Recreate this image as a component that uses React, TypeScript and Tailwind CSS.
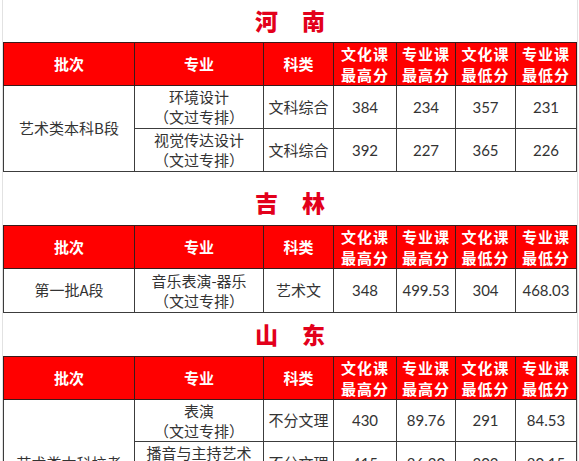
import React from "react";

const cjk = { fontFamily: '"Noto Sans CJK SC", "Noto Sans", sans-serif' };
const num = { fontFamily: 'Lato, "Liberation Sans", sans-serif' };

const widths = [131, 129, 70, 63, 59, 60, 61];

function Cols() {
  return (
    <colgroup>
      {widths.map((w, i) => (
        <col key={i} style={{ width: w }} />
      ))}
    </colgroup>
  );
}

function Header() {
  const two = [
    ["文化课", "最高分"],
    ["专业课", "最高分"],
    ["文化课", "最低分"],
    ["专业课", "最低分"],
  ];
  return (
    <tr className="h-[43px] bg-[#ff0000] text-white font-bold text-[15px]">
      <td className="border border-[#3a1a1a] text-center">批次</td>
      <td className="border border-[#3a1a1a] text-center">专业</td>
      <td className="border border-[#3a1a1a] text-center">科类</td>
      {two.map((t, i) => (
        <td key={i} className="border border-[#3a1a1a] text-center leading-[21px] tracking-[1px]">
          <div>{t[0]}</div>
          <div>{t[1]}</div>
        </td>
      ))}
    </tr>
  );
}

function Title({ a, b, cls }: { a: string; b: string; cls: string }) {
  return (
    <div className={"flex justify-center gap-[24px] text-[23px] font-black text-[#e3001b] " + cls} style={cjk}>
      <span>{a}</span>
      <span>{b}</span>
    </div>
  );
}

const td = "border border-[#3c3c3c] text-center";

function Major({ a }: { a: string }) {
  return (
    <td className={td + " leading-[20px]"}>
      <div>{a}</div>
      <div>（文过专排）</div>
    </td>
  );
}

function Nums({ v }: { v: string[] }) {
  return (
    <>
      {v.map((x, i) => (
        <td key={i} className={td + " text-[15px]"} style={num}>
          {x}
        </td>
      ))}
    </>
  );
}

export default function App() {
  return (
    <div className="w-[579px] h-[461px] overflow-hidden bg-white" style={cjk}>
      <div className="ml-[2px] w-[576px] h-[600px] border-x border-[#e2e2e2]">
        <Title a="河" b="南" cls="h-[42px] items-center pb-[2px]" />
        <table className="w-[573px] table-fixed border-collapse text-[15px] text-[#333]">
          <Cols />
          <tbody>
            <Header />
            <tr className="h-[43px]">
              <td rowSpan={2} className={td}>艺术类本科B段</td>
              <Major a="环境设计" />
              <td className={td}>文科综合</td>
              <Nums v={["384", "234", "357", "231"]} />
            </tr>
            <tr className="h-[43px]">
              <Major a="视觉传达设计" />
              <td className={td}>文科综合</td>
              <Nums v={["392", "227", "365", "226"]} />
            </tr>
          </tbody>
        </table>
        <Title a="吉" b="林" cls="h-[53px] items-center pt-[7px]" />
        <table className="w-[573px] table-fixed border-collapse text-[15px] text-[#333]">
          <Cols />
          <tbody>
            <Header />
            <tr className="h-[44px]">
              <td className={td}>第一批A段</td>
              <Major a="音乐表演-器乐" />
              <td className={td}>艺术文</td>
              <Nums v={["348", "499.53", "304", "468.03"]} />
            </tr>
          </tbody>
        </table>
        <Title a="山" b="东" cls="h-[43px] items-center" />
        <table className="w-[573px] table-fixed border-collapse text-[15px] text-[#333]">
          <Cols />
          <tbody>
            <Header />
            <tr className="h-[42px]">
              <td rowSpan={3} className={td}>艺术类本科校考</td>
              <Major a="表演" />
              <td className={td}>不分文理</td>
              <Nums v={["430", "89.76", "291", "84.53"]} />
            </tr>
            <tr className="h-[43px]">
              <Major a="播音与主持艺术" />
              <td className={td}>不分文理</td>
              <Nums v={["415", "86.20", "302", "80.15"]} />
            </tr>
            <tr className="h-[43px]">
              <Major a="戏剧影视导演" />
              <td className={td}>不分文理</td>
              <Nums v={["402", "85.10", "298", "81.40"]} />
            </tr>
          </tbody>
        </table>
      </div>
    </div>
  );
}
